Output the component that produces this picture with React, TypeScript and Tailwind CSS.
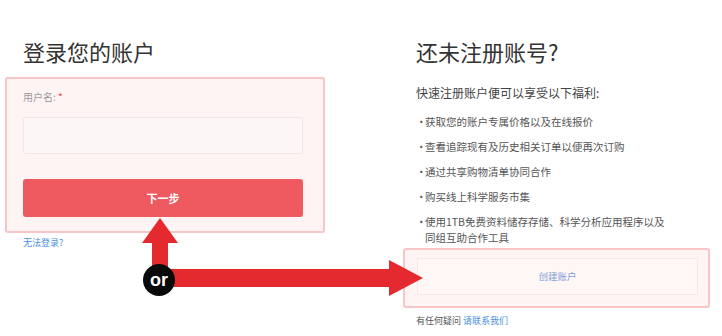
import React from 'react';

const benefits = [
  '获取您的账户专属价格以及在线报价',
  '查看追踪现有及历史相关订单以便再次订购',
  '通过共享购物清单协同合作',
  '购买线上科学服务市集',
];

function Annotation() {
  // red arrows + "or" badge drawn over the page
  return (
    <svg className="absolute inset-0 pointer-events-none" width="722" height="336" viewBox="0 0 722 336">
      <polygon points="160,218 142,243 178,243" fill="#e42a2e" />
      <rect x="152" y="242" width="16" height="38" fill="#e42a2e" />
      <rect x="159" y="269" width="232" height="18" fill="#e42a2e" />
      <polygon points="389,260 423,278 389,296" fill="#e42a2e" />
      <circle cx="159" cy="280" r="16" fill="#0a0a0a" />
      <text
        x="159"
        y="286"
        textAnchor="middle"
        fill="#ffffff"
        fontSize="18"
        fontWeight="700"
        fontFamily="'Liberation Sans', Arial, sans-serif"
      >
        or
      </text>
    </svg>
  );
}

export default function App() {
  return (
    <div
      className="relative w-[722px] h-[336px] bg-white overflow-hidden"
      style={{ fontFamily: "'Noto Sans CJK SC', 'Noto Sans', sans-serif" }}
    >
      <div className="flex pl-[5px]">
        {/* login column */}
        <div className="w-[320px]">
          <h1 className="mt-[37px] ml-[18px] text-[22px] leading-[28px] text-[#333] font-normal">登录您的账户</h1>
          <div className="mt-[12px] h-[156px] border-2 border-[#f8c6c6] rounded-[3px] bg-[#fff4f4] pl-[16px] pr-[20px] pt-[12px]">
            <div className="text-[10px] leading-[12px] text-[#9a9a9a]">
              用户名: <span className="text-[#e53c3c]">*</span>
            </div>
            <div className="mt-[14px] h-[37px] bg-[#fdf6f6] border border-[#f1e6e6] rounded-[2px]" />
            <button
              type="button"
              className="mt-[25px] w-full h-[38px] rounded-[3px] bg-[#ef5a60] text-white text-[11px] font-bold flex items-center justify-center"
            >
              下一步
            </button>
          </div>
          <a className="block mt-[4px] ml-[18px] text-[9px] leading-[12px] text-[#4a8fe0]">无法登录?</a>
        </div>

        {/* register column */}
        <div className="ml-[78px] w-[307px]">
          <h2 className="mt-[37px] ml-[13px] text-[22px] leading-[28px] text-[#333] font-normal">还未注册账号?</h2>
          <p className="mt-[20px] ml-[13px] text-[12px] leading-[16px] text-[#444]">快速注册账户便可以享受以下福利:</p>
          <ul className="mt-[13px] ml-[13px] flex flex-col gap-[9px] text-[10.5px] leading-[16px] text-[#555]">
            {benefits.map((b) => (
              <li key={b} className="flex">
                <span className="w-[9px] shrink-0">•</span>
                <span>{b}</span>
              </li>
            ))}
            <li className="flex">
              <span className="w-[9px] shrink-0">•</span>
              <span>
                使用1TB免费资料储存存储、科学分析应用程序以及
                <br />
                同组互助合作工具
              </span>
            </li>
          </ul>
          <div className="mt-[2px] h-[60px] border-2 border-[#f8c6c6] rounded-[3px] bg-[#fff4f4] pl-[12px] pr-[10px] pt-[8px]">
            <div className="h-[37px] border border-[#f6e8e8] bg-[#fff6f6] flex items-center justify-center text-[9.5px] text-[#7e9fd6]">
              创建账户
            </div>
          </div>
          <p className="mt-[7px] ml-[13px] text-[9px] leading-[12px] text-[#555]">
            有任何疑问 <a className="text-[#4a8fe0]">请联系我们</a>
          </p>
        </div>
      </div>
      <Annotation />
    </div>
  );
}
